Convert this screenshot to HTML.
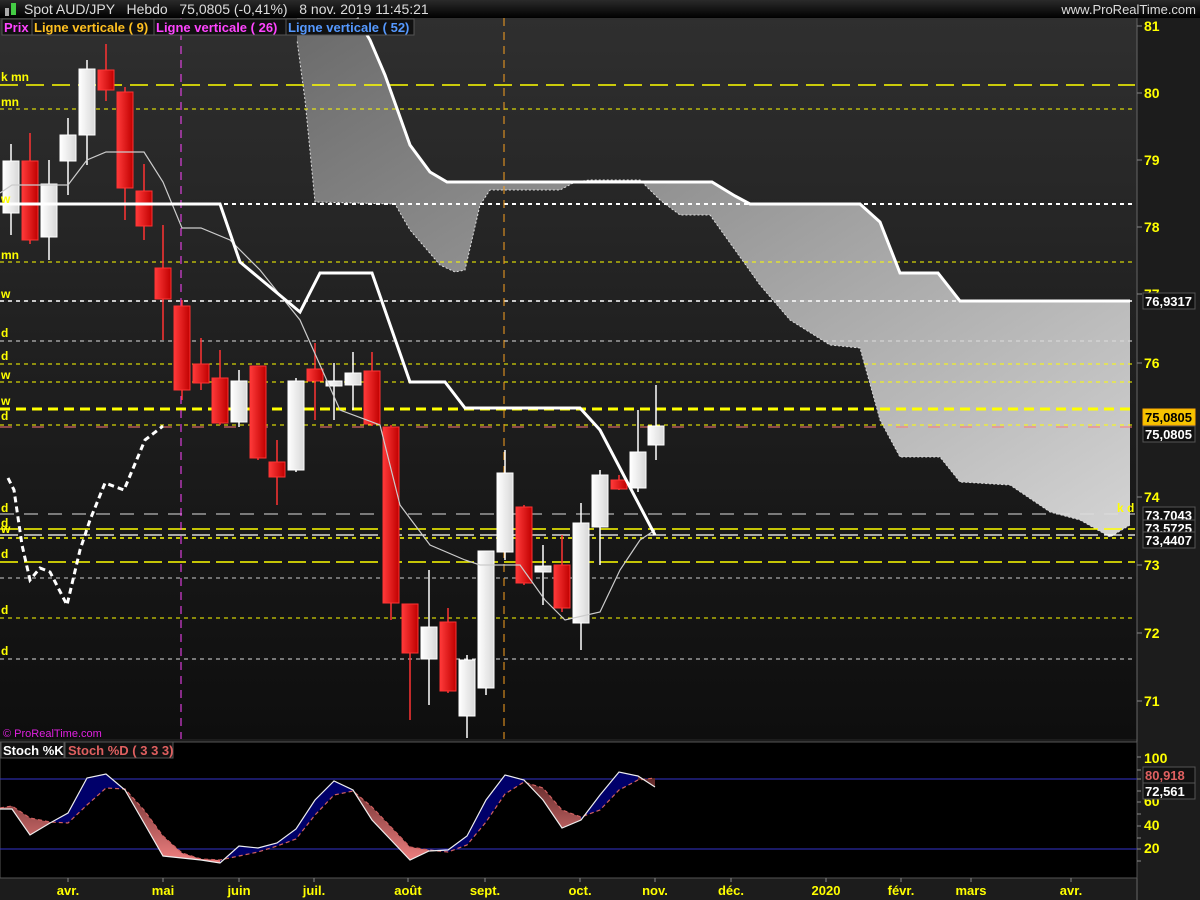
<!DOCTYPE html>
<html><head><meta charset="utf-8"><style>
html,body{margin:0;padding:0;background:#1c1c1c;width:1200px;height:900px;overflow:hidden;font-family:"Liberation Sans",sans-serif}
</style></head><body>
<svg id="s" width="1200" height="900" xmlns="http://www.w3.org/2000/svg" font-family="Liberation Sans, sans-serif">
<defs>
<linearGradient id="bg" x1="0" y1="0" x2="0" y2="1"><stop offset="0" stop-color="#2f2f2f"/><stop offset="1" stop-color="#0e0e0e"/></linearGradient>
<linearGradient id="cl" x1="0" y1="0" x2="1" y2="1"><stop offset="0" stop-color="#6a6a6a"/><stop offset="1" stop-color="#d4d4d4"/></linearGradient>
<linearGradient id="wc" x1="0" y1="0" x2="1" y2="0"><stop offset="0" stop-color="#ffffff"/><stop offset="1" stop-color="#d8d8d8"/></linearGradient>
<linearGradient id="rc" x1="0" y1="0" x2="1" y2="0"><stop offset="0" stop-color="#ff3a3a"/><stop offset="1" stop-color="#c00000"/></linearGradient>
<linearGradient id="hd" x1="0" y1="0" x2="0" y2="1"><stop offset="0" stop-color="#2a2a2a"/><stop offset="1" stop-color="#000"/></linearGradient>
<linearGradient id="sr" gradientUnits="userSpaceOnUse" x1="0" y1="775" x2="0" y2="862"><stop offset="0" stop-color="#5a2525"/><stop offset="1" stop-color="#f08080"/></linearGradient>
</defs>
<rect x="0" y="0" width="1200" height="900" fill="#1c1c1c"/>
<rect x="0" y="18" width="1137" height="721" fill="url(#bg)"/>
<rect x="0" y="0" width="1200" height="18" fill="url(#hd)"/>
<g id="g"></g>
</svg>
<script>
const NS="http://www.w3.org/2000/svg",g=document.getElementById('g');
function el(t,a,txt){const e=document.createElementNS(NS,t);for(const k in a)e.setAttribute(k,a[k]);if(txt!==undefined)e.textContent=txt;g.appendChild(e);return e;}
function pl(pts,a){a.points=pts.map(p=>p.join(',')).join(' ');return el('polyline',Object.assign({fill:'none'},a));}
const up=[[297,18],[357,18],[370,40],[385,75],[410,145],[430,172],[447,182],[712,182],[735,196],[750,204],[860,204],[880,222],[900,273],[938,273],[960,301],[1130,301]];
const lo=[[1130,525],[1110,537],[1080,520],[1050,512],[1010,485],[960,482],[940,457],[900,457],[880,420],[860,348],[830,345],[790,320],[760,285],[735,250],[710,215],[680,215],[660,200],[640,180],[590,180],[575,182],[560,190],[490,190],[480,205],[465,270],[455,272],[440,265],[410,230],[395,204],[315,202],[305,100],[297,40]];
el('polygon',{points:up.concat(lo).map(p=>p.join(',')).join(' '),fill:'url(#cl)'});
pl(lo,{stroke:'#ddd','stroke-width':1,'stroke-dasharray':'2,2'});
const H=[[85,'#ff0','18,8',1.5],[109,'#ff0','4,4',1],[204,'#fff','4,4',2],[262,'#ff0','4,4',1],[301,'#fff','4,4',1.5],[341,'#ddd','4,4',1],[364,'#ff0','4,4',1],[382,'#ff0','4,4',1],[409,'#ff0','10,6',3],[425,'#ff0','4,4',1],[427,'#f77','12,20',1],[514,'#ddd','14,10',1],[529,'#ff0','18,6',1.5],[535,'#fff','18,6',1.2],[538,'#ff0','4,4',1.5],[562,'#ff0','18,6',1.5],[578,'#ccc','4,4',1],[618,'#ff0','4,4',1],[659,'#ddd','4,4',1]];
H.forEach(h=>el('line',{x1:0,x2:1135,y1:h[0],y2:h[0],stroke:h[1],'stroke-dasharray':h[2],'stroke-width':h[3]}));
el('line',{x1:181,x2:181,y1:18,y2:739,stroke:'#f4f','stroke-dasharray':'8,6'});
el('line',{x1:504,x2:504,y1:18,y2:739,stroke:'#f9a020','stroke-dasharray':'8,6'});
const C=[[11,161,213,144,235,'w'],[30,161,240,133,244,'r'],[49,184,237,160,260,'w'],[68,135,161,118,195,'w'],[87,69,135,60,165,'w'],[106,70,90,44,101,'r'],[125,92,188,87,220,'r'],[144,191,226,164,240,'r'],[163,268,299,225,340,'r'],[182,306,390,300,400,'r'],[201,364,383,338,390,'r'],[220,378,423,350,425,'r'],[239,381,422,370,427,'w'],[258,366,458,366,460,'r'],[277,462,477,440,505,'r'],[296,381,470,378,472,'w'],[315,369,381,343,420,'r'],[334,381,386,363,420,'w'],[353,373,385,352,410,'w'],[372,371,424,352,426,'r'],[391,427,603,425,620,'r'],[410,604,653,604,720,'r'],[429,627,659,570,705,'w'],[448,622,691,608,693,'r'],[467,660,716,655,738,'w'],[486,551,688,551,695,'w'],[505,473,552,450,560,'w'],[524,507,583,505,585,'r'],[543,566,572,545,605,'w'],[562,565,608,535,612,'r'],[581,523,623,503,650,'w'],[600,475,527,470,565,'w'],[619,480,489,475,490,'r'],[638,452,488,410,492,'w'],[656,426,445,385,460,'w']];
C.forEach(c=>{const w=c[5]=='w';el('line',{x1:c[0],x2:c[0],y1:c[3],y2:c[4],stroke:w?'#fff':'#f33','stroke-width':1.5});
el('rect',{x:c[0]-8,y:c[1],width:16,height:Math.max(3,c[2]-c[1]),fill:w?'url(#wc)':'url(#rc)',stroke:w?'#fff':'#f33','stroke-width':1});});
pl([[0,193],[12,185],[68,185],[87,160],[106,152],[144,152],[163,182],[182,228],[201,228],[230,240],[260,270],[300,320],[340,410],[380,425],[400,505],[430,545],[465,560],[480,565],[520,565],[545,600],[565,620],[600,612],[620,570],[640,540],[655,530]],{stroke:'#ccc','stroke-width':1.2});
pl([[0,204],[220,204],[240,262],[300,312],[320,273],[372,273],[410,382],[445,382],[465,408],[580,408],[600,430],[655,535]],{stroke:'#fff','stroke-width':3});
pl(up.slice(1),{stroke:'#fff','stroke-width':3});
pl([[8,478],[14,490],[22,545],[30,580],[40,568],[50,572],[67,605],[80,550],[90,520],[105,483],[124,490],[145,440],[163,426]],{stroke:'#fff','stroke-width':3,'stroke-dasharray':'6,4'});
[[81,'k mn'],[106,'mn'],[203,'w'],[259,'mn'],[298,'w'],[337,'d'],[360,'d'],[379,'w'],[405,'w'],[420,'d'],[512,'d'],[527,'d'],[533,'w'],[558,'d'],[614,'d'],[655,'d']].forEach(l=>el('text',{x:1,y:l[0],fill:'#ff0','font-size':12,'font-weight':'bold'},l[1]));
el('text',{x:1117,y:512,fill:'#ff0','font-size':12,'font-weight':'bold'},'k d');
el('text',{x:3,y:737,fill:'#e020e0','font-size':11},'© ProRealTime.com');
el('line',{x1:1137,x2:1137,y1:18,y2:900,stroke:'#666'});
[[81,30],[80,97],[79,164],[78,231],[77,298],[76,367],[74,501],[73,569],[72,637],[71,705]].forEach(p=>{el('line',{x1:1137,x2:1142,y1:p[1]-4,y2:p[1]-4,stroke:'#888'});el('text',{x:1144,y:p[1]+1,fill:'#ff0','font-size':14,'font-weight':'bold'},p[0]);});
function lab(y,t,bg,fg,bd){el('rect',{x:1143,y:y,width:52,height:16,fill:bg,stroke:bd||'#555'});el('text',{x:1145,y:y+13,fill:fg,'font-size':13,'font-weight':'bold'},t);}
lab(293,'76,9317','#111','#fff');lab(409,'75,0805','#f5c400','#000','#fa0');lab(426,'75,0805','#111','#fff');
lab(507,'73,7043','#111','#fff');lab(520,'73,5725','#111','#fff');lab(532,'73,4407','#111','#fff');
el('rect',{x:5,y:8,width:4,height:8,fill:'#aaa'});el('rect',{x:11,y:3,width:5,height:12,fill:'#4c4'});
const ht=el('text',{x:24,y:14,fill:'#ddd','font-size':14},'Spot AUD/JPY   Hebdo   75,0805 (-0,41%)   8 nov. 2019 11:45:21');ht.style.whiteSpace='pre';
el('text',{x:1196,y:14,fill:'#ddd','font-size':13,'text-anchor':'end'},'www.ProRealTime.com');
[[2,30,'Prix','#f4f'],[32,122,'Ligne verticale ( 9)','#ffc020'],[154,132,'Ligne verticale ( 26)','#f4f'],[286,128,'Ligne verticale ( 52)','#59f']].forEach(b=>{el('rect',{x:b[0],y:19,width:b[1],height:16,fill:'#111',stroke:'#555'});el('text',{x:b[0]+2,y:32,fill:b[3],'font-size':13,'font-weight':'bold'},b[2]);});
el('rect',{x:0,y:742,width:1137,height:136,fill:'#000',stroke:'#555'});
el('rect',{x:1,y:742,width:63,height:16,fill:'#111',stroke:'#555'});el('text',{x:3,y:755,fill:'#fff','font-size':13,'font-weight':'bold'},'Stoch %K');
el('rect',{x:65,y:742,width:108,height:16,fill:'#111',stroke:'#555'});el('text',{x:68,y:755,fill:'#e06060','font-size':13,'font-weight':'bold'},'Stoch %D ( 3 3 3)');
el('line',{x1:0,x2:1137,y1:779,y2:779,stroke:'#3333cc'});el('line',{x1:0,x2:1137,y1:849,y2:849,stroke:'#3333cc'});
const xs=[0,12,30,50,68,87,106,125,144,163,182,201,220,239,258,277,296,315,334,353,372,391,410,429,448,467,486,505,524,543,562,581,600,619,638,655];
const K=[809,809,835,823,813,778,774,790,823,856,858,860,863,846,848,843,829,800,781,790,820,840,860,851,850,836,800,775,780,800,828,820,795,772,776,787];
const D=[808,806,818,822,823,805,788,789,810,836,853,859,860,856,852,846,839,815,795,791,807,827,847,850,852,845,822,794,782,788,810,817,810,790,780,778];
for(let i=0;i<xs.length-1;i++){const bl=(K[i]+K[i+1])<(D[i]+D[i+1]);el('polygon',{points:`${xs[i]},${K[i]} ${xs[i+1]},${K[i+1]} ${xs[i+1]},${D[i+1]} ${xs[i]},${D[i]}`,fill:bl?'#00006a':'url(#sr)'});}
pl(xs.map((x,i)=>[x,D[i]]),{stroke:'#d06060','stroke-width':1.2,'stroke-dasharray':'4,3'});
pl(xs.map((x,i)=>[x,K[i]]),{stroke:'#eee','stroke-width':1.2});
[[100,763],[60,806],[40,830],[20,853]].forEach(p=>{el('text',{x:1144,y:p[1],fill:'#ff0','font-size':14,'font-weight':'bold'},p[0]);});
[757,770,779,791,802,814,826,838,849,861].forEach(y=>el('line',{x1:1137,x2:1141,y1:y,y2:y,stroke:'#888'}));
el('rect',{x:1143,y:767,width:52,height:16,fill:'#111',stroke:'#555'});el('text',{x:1145,y:780,fill:'#e06060','font-size':13,'font-weight':'bold'},'80,918');
el('rect',{x:1143,y:783,width:52,height:16,fill:'#111',stroke:'#555'});el('text',{x:1145,y:796,fill:'#fff','font-size':13,'font-weight':'bold'},'72,561');
[[68,'avr.'],[163,'mai'],[239,'juin'],[314,'juil.'],[408,'août'],[485,'sept.'],[580,'oct.'],[655,'nov.'],[731,'déc.'],[826,'2020'],[901,'févr.'],[971,'mars'],[1071,'avr.']].forEach(a=>{el('line',{x1:a[0],x2:a[0],y1:878,y2:882,stroke:'#888'});el('text',{x:a[0],y:895,fill:'#ff0','font-size':13,'font-weight':'bold','text-anchor':'middle'},a[1]);});
</script>
</body></html>
